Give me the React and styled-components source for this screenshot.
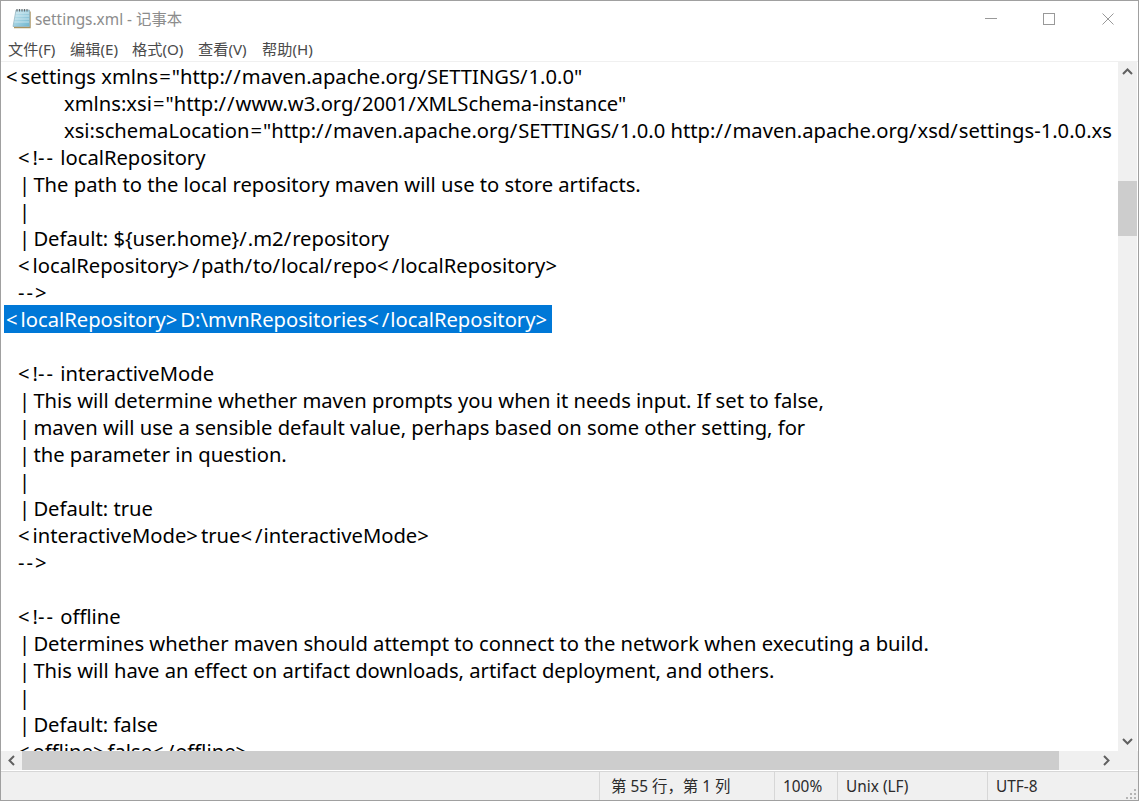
import React from 'react';
import styled, { createGlobalStyle } from 'styled-components';

const Global = createGlobalStyle`
  html, body { margin: 0; padding: 0; background: #fff; }
`;
const Window = styled.div`
  width: 1139px; height: 801px; box-sizing: border-box;
  border: 1px solid #a0a0a0; display: flex; flex-direction: column;
  overflow: hidden; background: #fff;
  font-family: "Noto Sans", "Noto Sans CJK SC", sans-serif;
`;
const TitleBar = styled.div`
  height: 38px; display: flex; align-items: center; flex: none;
  padding: 0 0 3px 10px; box-sizing: border-box;
`;
const TitleText = styled.span`
  margin-left: 3px; font-size: 15.4px; color: #8c8c8c;
`;
const WindowControls = styled.div`
  margin-left: auto; margin-top: 1px; display: flex; align-items: center;
  gap: 46px; padding-right: 24px;
`;
const ControlIcon = styled.svg`
  width: 12px; height: 12px; margin-right: ${p => p.$after || 0}px;
`;
const MenuBar = styled.div`
  height: 23px; flex: none; display: flex; border-bottom: 1px solid #f0f0f0;
  padding-left: 7px; gap: 7px; box-sizing: border-box;
`;
const MenuItem = styled.span`
  font-size: 15.2px; color: #4a4a4a; line-height: 21px; width: ${p => p.$w}px; white-space: pre;
`;
const Body = styled.div`
  flex: none; height: 689px; display: flex; min-height: 0;
`;
const Editor = styled.div`
  flex: none; width: 1112px; margin-right: 5px; overflow: hidden; padding-top: 1px;
  box-sizing: border-box;
`;
const Line = styled.div`
  display: flex; height: 27px; line-height: 27px; font-size: 20.2px; white-space: pre;
  color: #000; padding-left: ${p => p.$indent + 5}px;
`;
const Sym = styled.span`
  letter-spacing: ${p => p.$s}px;
  margin-left: ${p => p.$before || 0}px;
`;
const Selected = styled.span`
  display: block; background: #0078d7; color: #fff; height: 28px; line-height: 28px;
  margin: -1px 0 0 -2px; padding: 0 2px;
`;
const VScroll = styled.div`
  width: 19px; flex: none; background: #f0f0f0; display: flex; flex-direction: column;
  align-items: center;
`;
const VThumb = styled.div`
  width: 19px; height: 55px; background: #cdcdcd; margin-top: 100px; flex: none;
`;
const ArrowBox = styled.div`
  flex: none; display: flex; align-items: center; justify-content: center;
  width: ${p => p.$w}px; height: ${p => p.$h}px;
`;
const BottomArrow = styled(ArrowBox)`
  margin-top: auto;
`;
const HScrollRow = styled.div`
  height: 19px; flex: none; display: flex; background: #f0f0f0; align-items: stretch;
`;
const HThumb = styled.div`
  width: 1037px; background: #cdcdcd; flex: none;
`;
const RightArrow = styled(ArrowBox)`
  margin-left: auto; margin-right: 22px;
`;
const StatusBar = styled.div`
  flex: 1; display: flex; background: #f0f0f0; border-top: 1px solid #d7d7d7;
  font-size: 15.4px; color: #2b2b2b; position: relative; margin-top: 1px;
`;
const StatusCell = styled.div`
  box-sizing: border-box; width: ${p => p.$w}px; flex: none;
  padding-left: ${p => p.$pad}px; border-left: ${p => p.$plain ? 'none' : '1px solid #d7d7d7'};
  line-height: 29px; white-space: pre;
`;
const Grip = styled.svg`
  position: absolute; right: 1px; bottom: 1px;
`;

const Arrow = ({ d }) => (
  <svg width="11" height="11" viewBox="0 0 11 11"><path d={d} fill="none" stroke="#606060" strokeWidth="2" /></svg>
);

const NotepadIcon = () => (
  <svg width="21" height="21" viewBox="0 0 21 21">
    <defs>
      <linearGradient id="nb" x1="0" y1="0" x2="1" y2="1">
        <stop offset="0" stopColor="#cfeaf2" />
        <stop offset="1" stopColor="#6fb6cf" />
      </linearGradient>
    </defs>
    <path d="M19 3.5 V19.5 H3" fill="none" stroke="#a8925f" strokeWidth="1.4" />
    <path d="M5 2 H18.5 V18.5 H2 Z" fill="url(#nb)" stroke="#8fb0bb" strokeWidth="0.7" />
    <path d="M5 5 H18 M4.4 8 H18 M3.8 11 H18 M3.2 14 H18" stroke="#dff0f5" strokeWidth="0.7" />
    <path d="M6 1 V3.5 M8.5 1 V3.5 M11 1 V3.5 M13.5 1 V3.5 M16 1 V3.5" stroke="#666" strokeWidth="1" />
  </svg>
);

const lines = [
  [0, '<settings xmlns="http://maven.apache.org/SETTINGS/1.0.0"'],
  [58, 'xmlns:xsi="http://www.w3.org/2001/XMLSchema-instance"'],
  [58, 'xsi:schemaLocation="http://maven.apache.org/SETTINGS/1.0.0 http://maven.apache.org/xsd/settings-1.0.0.xs'],
  [12, '<!-- localRepository'],
  [13, '| The path to the local repository maven will use to store artifacts.'],
  [13, '|'],
  [13, '| Default: ${user.home}/.m2/repository'],
  [12, '<localRepository>/path/to/local/repo</localRepository>'],
  [12, '-->'],
  [0, '<localRepository>D:\\mvnRepositories</localRepository>', true],
  [0, ''],
  [12, '<!-- interactiveMode'],
  [13, '| This will determine whether maven prompts you when it needs input. If set to false,'],
  [13, '| maven will use a sensible default value, perhaps based on some other setting, for'],
  [13, '| the parameter in question.'],
  [13, '|'],
  [13, '| Default: true'],
  [12, '<interactiveMode>true</interactiveMode>'],
  [12, '-->'],
  [0, ''],
  [12, '<!-- offline'],
  [13, '| Determines whether maven should attempt to connect to the network when executing a build.'],
  [13, '| This will have an effect on artifact downloads, artifact deployment, and others.'],
  [13, '|'],
  [13, '| Default: false'],
  [12, '<offline>false</offline>'],
];

// The reference font sets these marks wider than Noto Sans does.
const withMarks = text =>
  text.split(/(--|[<>=/]|^\| )/).map((part, i) => {
    if (part === '') return null;
    if (part === '| ') return <Sym key={i} $s={-1}>{part}</Sym>;
    if (part === '--') return <Sym key={i} $s={2}>{part}</Sym>;
    if (part === '<' || part === '>') return <Sym key={i} $s={3}>{part}</Sym>;
    if (part === '=') return <Sym key={i} $s={1} $before={1}>{part}</Sym>;
    if (part === '/') return <Sym key={i} $s={1}>{part}</Sym>;
    return part;
  });

export default function App() {
  return (
    <Window>
      <Global />
      <TitleBar>
        <NotepadIcon />
        <TitleText>settings.xml - 记事本</TitleText>
        <WindowControls>
          <ControlIcon viewBox="0 0 12 12"><path d="M0 5.5 H12" stroke="#999" /></ControlIcon>
          <ControlIcon viewBox="0 0 12 12" $after={1}><rect x="0.5" y="0.5" width="11" height="11" fill="none" stroke="#999" /></ControlIcon>
          <ControlIcon viewBox="0 0 12 12"><path d="M0.5 0.5 L11.5 11.5 M11.5 0.5 L0.5 11.5" stroke="#999" /></ControlIcon>
        </WindowControls>
      </TitleBar>
      <MenuBar>
        <MenuItem $w={55}>文件(F)</MenuItem>
        <MenuItem $w={55}>编辑(E)</MenuItem>
        <MenuItem $w={59}>格式(O)</MenuItem>
        <MenuItem $w={57}>查看(V)</MenuItem>
        <MenuItem $w={60}>帮助(H)</MenuItem>
      </MenuBar>
      <Body>
        <Editor>
          {lines.map(([indent, text, sel], i) => (
            <Line key={i} $indent={indent}>
              {sel ? <Selected>{withMarks(text)}</Selected> : <span>{withMarks(text)}</span>}
            </Line>
          ))}
        </Editor>
        <VScroll>
          <ArrowBox $w={19} $h={19}><Arrow d="M1 8 L5.5 3.5 L10 8" /></ArrowBox>
          <VThumb />
          <BottomArrow $w={19} $h={19}><Arrow d="M1 3 L5.5 7.5 L10 3" /></BottomArrow>
        </VScroll>
      </Body>
      <HScrollRow>
        <ArrowBox $w={21} $h={19}><Arrow d="M8 1 L3.5 5.5 L8 10" /></ArrowBox>
        <HThumb />
        <RightArrow $w={19} $h={19}><Arrow d="M3 1 L7.5 5.5 L3 10" /></RightArrow>
      </HScrollRow>
      <StatusBar>
        <StatusCell $plain $w={598} />
        <StatusCell $w={175} $pad={11}>第 55 行，第 1 列</StatusCell>
        <StatusCell $w={63} $pad={8}>100%</StatusCell>
        <StatusCell $w={150} $pad={8}>Unix (LF)</StatusCell>
        <StatusCell $w={120} $pad={8}>UTF-8</StatusCell>
        <Grip width="12" height="12" viewBox="0 0 12 12">
          <path d="M9 1h2v2H9z M5 5h2v2H5z M9 5h2v2H9z M1 9h2v2H1z M5 9h2v2H5z M9 9h2v2H9z" fill="#b5b5b5" />
        </Grip>
      </StatusBar>
    </Window>
  );
}
